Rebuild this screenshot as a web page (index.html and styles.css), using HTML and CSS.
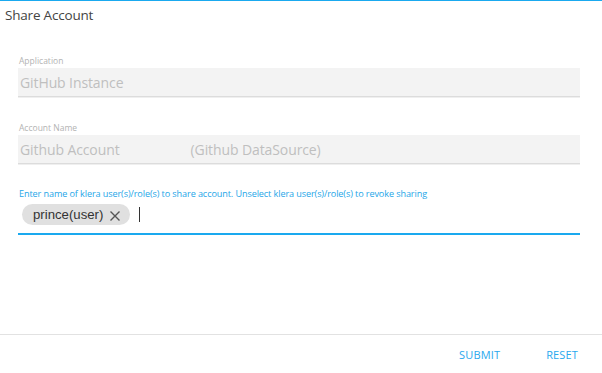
FILE: index.html
```html
<!DOCTYPE html>
<html>
<head>
<meta charset="utf-8">
<link rel="stylesheet" href="styles.css">
</head>
<body>
<div class="dialog">
  <div class="title">Share Account</div>
  <div class="content">
    <div class="field first">
      <div class="label">Application</div>
      <div class="box"><span class="value">GitHub Instance</span></div>
    </div>
    <div class="field second">
      <div class="label">Account Name</div>
      <div class="box"><span class="value">Github Account</span><span class="value ds">(Github DataSource)</span></div>
    </div>
    <div class="share">
      <div class="hint">Enter name of klera user(s)/role(s) to share account. Unselect klera user(s)/role(s) to revoke sharing</div>
      <div class="chips">
        <span class="chip">prince(user)<svg class="x" viewBox="0 0 12 12" width="12" height="12"><path d="M1.5 1.5 L10.5 10.5 M10.5 1.5 L1.5 10.5" stroke="#555" stroke-width="1.4" fill="none"/></svg></span>
        <span class="caret"></span>
      </div>
    </div>
  </div>
  <div class="footer">
    <span class="btn submit">SUBMIT</span>
    <span class="btn reset">RESET</span>
  </div>
</div>
</body>
</html>
```
FILE: styles.css
```css
html, body {
  margin: 0;
  padding: 0;
  background: #fff;
}
.dialog {
  width: 602px;
  height: 373px;
  box-sizing: border-box;
  border-top: 1px solid #1aa9ef;
  display: flex;
  flex-direction: column;
  font-family: "Open Sans", "Noto Sans", sans-serif;
}
.title {
  padding: 5px 0 0 5px;
  font-size: 13.5px;
  line-height: 19px;
  color: #444;
  letter-spacing: -0.2px;
}
.content {
  padding: 0 22px 0 18px;
}
.field.first {
  margin-top: 31px;
}
.field.second {
  margin-top: 26px;
}
.label {
  font-size: 8.5px;
  line-height: 10px;
  color: #b3b3b3;
  padding-left: 1px;
  margin-bottom: 2px;
}
.box {
  height: 28px;
  background: #f3f3f3;
  border-bottom: 1px solid #dcdcdc;
  box-shadow: 0 1px 0 #efefef;
  display: flex;
  align-items: center;
  padding-left: 2px;
}
.value {
  font-size: 14px;
  color: #bfbfbf;
  letter-spacing: -0.1px;
}
.value.ds {
  margin-left: 71px;
}
.share {
  margin-top: 24px;
  border-bottom: 2px solid #1aa9ef;
  padding-left: 1px;
}
.hint {
  font-size: 9.1px;
  line-height: 11px;
  color: #1ea6e8;
  letter-spacing: -0.1px;
}
.chips {
  display: flex;
  align-items: center;
  height: 30px;
  padding-left: 3px;
  padding-bottom: 4px;
}
.chip {
  display: inline-flex;
  align-items: center;
  height: 21px;
  padding: 0 9px 0 11px;
  border-radius: 11px;
  background: #e0e0e0;
  font-family: "Liberation Sans", Arial, sans-serif;
  font-size: 13.2px;
  color: #333;
}
.chip .x {
  margin-left: 6px;
  margin-top: 4px;
}
.caret {
  display: inline-block;
  width: 1px;
  height: 15px;
  background: #333;
  margin-left: 9px;
}
.footer {
  margin-top: auto;
  height: 38px;
  border-top: 1px solid #e2e2e2;
  display: flex;
  justify-content: flex-end;
  align-items: center;
  padding-right: 24px;
}
.btn {
  font-size: 11px;
  color: #2aa8ee;
  letter-spacing: 0.15px;
}
.btn.reset {
  margin-left: 46px;
}
```
